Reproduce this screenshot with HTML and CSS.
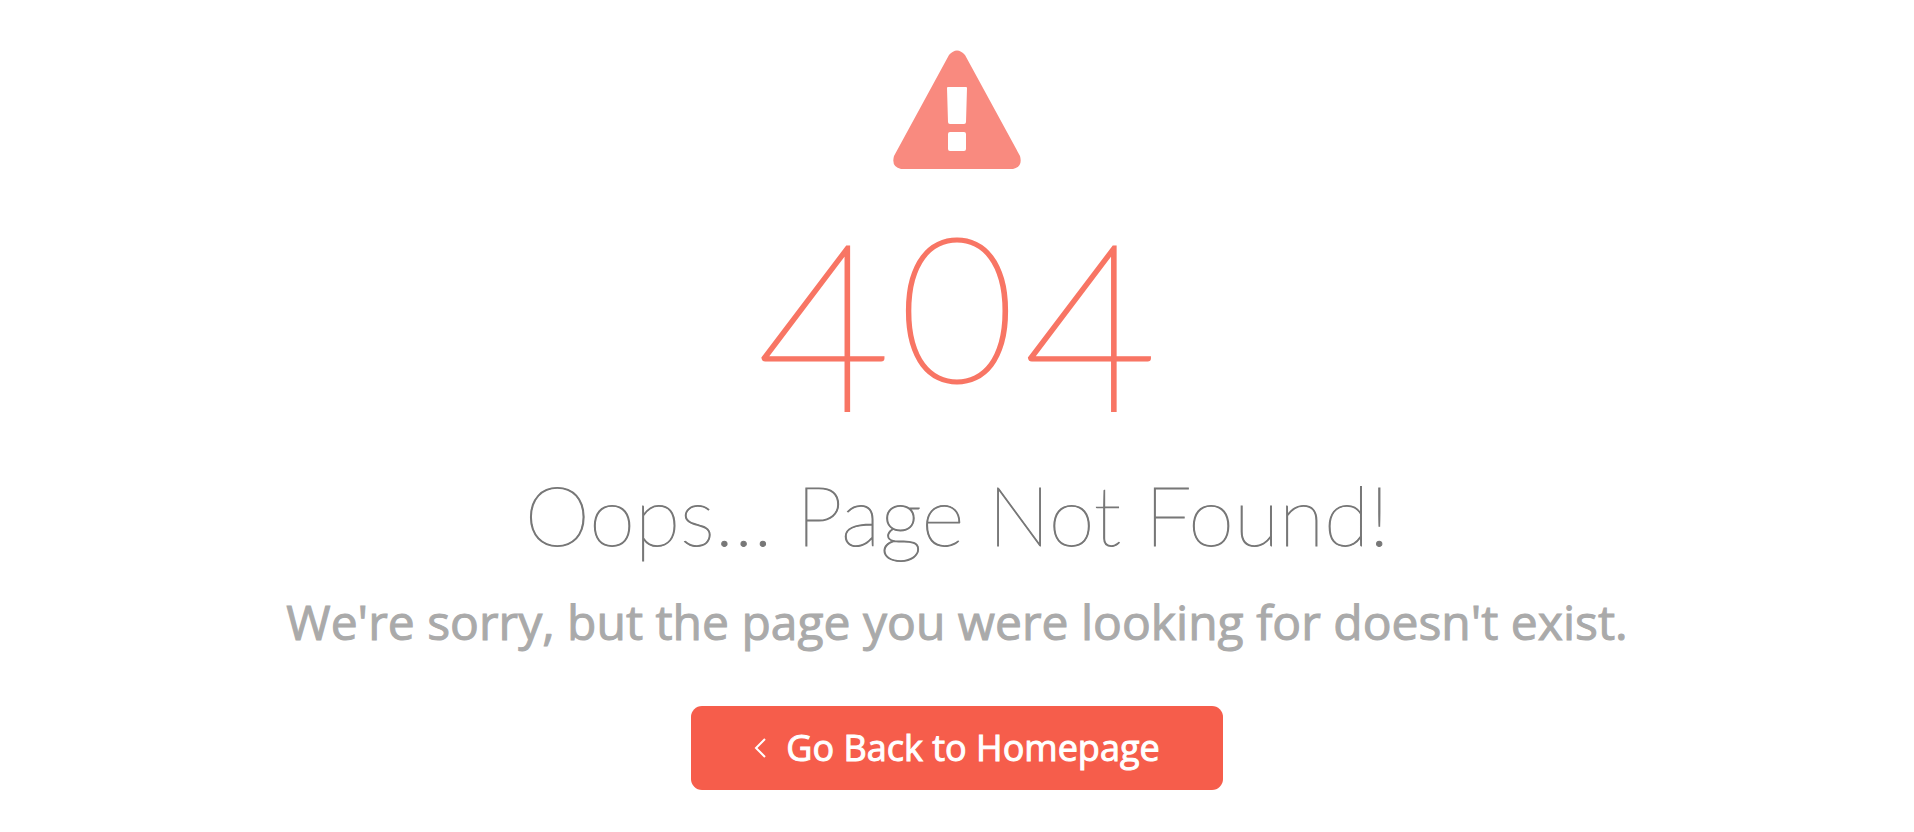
FILE: index.html
```html
<!DOCTYPE html>
<html lang="en">
<head>
<meta charset="utf-8">
<title>404 - Page Not Found</title>
<link rel="stylesheet" href="styles.css">
</head>
<body>
<main class="error-page">
<svg class="warning" viewBox="0 0 130 120" aria-hidden="true"><path fill-rule="evenodd" d="M57 5Q65-4 73 5L128 106Q131 117 121 119H9Q-1 117 2 106ZM56 37Q55 37 55 38L56 72Q56 74 58 74H72Q74 74 74 72L75 38Q75 37 74 37ZM58 82Q56 82 56 84V99Q56 101 58 101H72Q74 101 74 99V84Q74 82 72 82Z"/></svg>
<h1 class="code">4<span class="zero">0</span>4</h1>
<h2 class="title">Oops... Page Not Found!</h2>
<p class="message">We're sorry, but the page you were looking for doesn't exist.</p>
<a class="home-button" href="/"><svg class="chevron" viewBox="0 0 12 20" aria-hidden="true"><path d="M11 1L2 10L11 19"/></svg><span>Go Back to Homepage</span></a>
</main>
</body>
</html>
```
FILE: styles.css
```css
* { box-sizing: border-box; }
body { margin: 0; background: #fff; }
.error-page { display: flex; flex-direction: column; align-items: center; padding: 50px 24px 40px; text-align: center; }
.warning { width: 130px; height: 120px; fill: #f98a7f; }
.code { height: 200px; margin: 50px 0 0; font: 100 232px/200px Lato, sans-serif; color: #f87564; -webkit-text-stroke: 3px #f87564; }
.zero { padding: 0 8px; font-size: 200px; line-height: 0; vertical-align: 28px; }
.title { margin: 50px 0 0; font: 100 83px/88px Lato, sans-serif; color: #777; -webkit-text-stroke: 1px #777; }
.message { margin: 30px 0 0; font: 400 48px/68px "Open Sans", sans-serif; color: #aaa; -webkit-text-stroke: 1px #aaa; }
.home-button { display: flex; align-items: center; justify-content: center; gap: 20px; margin-top: 50px; padding: 17px 63px; border-radius: 11px; background: #f65d4b; color: #fff; font: 400 36px/50px "Open Sans", sans-serif; text-decoration: none; -webkit-text-stroke: 1px #fff; }
.chevron { width: 12px; height: 20px; fill: none; stroke: #fff; stroke-width: 2; }
```
